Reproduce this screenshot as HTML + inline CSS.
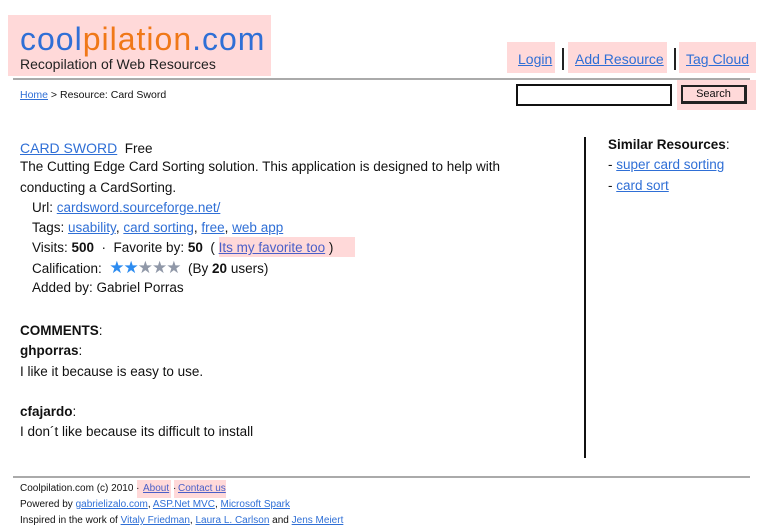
<!DOCTYPE html>
<html><head><style>
*{margin:0;padding:0;box-sizing:border-box}
body{width:781px;height:532px;background:#fff;position:relative;overflow:hidden;font-family:"Liberation Sans",sans-serif;color:#111}
.a{position:absolute;white-space:nowrap}
a,.l{color:#2f6fd6;text-decoration:underline}
.pk{position:absolute;background:#ffd9d9}
.t{font-size:13.5px;line-height:20px}
.f{font-size:10px;line-height:16px}
b{font-weight:bold}
</style></head><body>
<div class="pk" style="left:8px;top:15px;width:263px;height:61px"></div>
<div class="a" style="left:20px;top:19px;font-size:32px;letter-spacing:1px;color:#2f6fd6;line-height:40px">cool<span style="color:#f07818">pilation</span>.com</div>
<div class="a" style="left:20px;top:55px;font-size:14px;line-height:18px;color:#222">Recopilation of Web Resources</div>

<div class="pk" style="left:507px;top:42px;width:48px;height:31px"></div>
<div class="pk" style="left:568px;top:42px;width:99px;height:31px"></div>
<div class="pk" style="left:679px;top:42px;width:77px;height:31px"></div>
<div class="a l" style="left:518px;top:49px;font-size:14px;line-height:20px">Login</div>
<div class="a l" style="left:575px;top:49px;font-size:14px;line-height:20px">Add Resource</div>
<div class="a l" style="left:686px;top:49px;font-size:14px;line-height:20px">Tag Cloud</div>
<div class="a" style="left:562px;top:48px;width:2px;height:22px;background:#222"></div>
<div class="a" style="left:674px;top:48px;width:2px;height:22px;background:#222"></div>

<div class="a" style="left:13px;top:78px;width:737px;height:2px;background:#aaa"></div>
<div class="a" style="left:20px;top:88px;font-size:10.5px;line-height:14px"><span class="l">Home</span> &gt; Resource: Card Sword</div>
<div class="a" style="left:516px;top:84px;width:156px;height:22px;border:2px solid #111"></div>
<div class="pk" style="left:677px;top:80px;width:79px;height:30px"></div>
<div class="a" style="left:681px;top:85px;width:66px;height:19px;border:2px solid #222;border-right-width:3px;border-bottom-width:3px;font-size:11px;line-height:15px;text-align:center">Search</div>

<div class="a t" style="left:20px;top:138px"><span class="l" style="font-size:14px">CARD SWORD</span>&nbsp; Free</div>
<div class="a t" style="left:20px;top:157px">The Cutting Edge Card Sorting solution. This application is designed to help with</div>
<div class="a t" style="left:20px;top:178px">conducting a CardSorting.</div>
<div class="a t" style="left:32px;top:198px">Url: <span class="l">cardsword.sourceforge.net/</span></div>
<div class="a t" style="left:32px;top:218px">Tags: <span class="l">usability</span>, <span class="l">card sorting</span>, <span class="l">free</span>, <span class="l">web app</span></div>
<div class="pk" style="left:219px;top:237px;width:136px;height:20px"></div>
<div class="a t" style="left:32px;top:238px">Visits: <b>500</b> &nbsp;·&nbsp; Favorite by: <b>50</b> &nbsp;( <span class="l" style="color:#4a5fc8">Its my favorite too</span> )</div>
<div class="a t" style="left:32px;top:258px">Calification: &nbsp;<span style="color:#2d8cf0;font-size:17px;letter-spacing:-1px">★★</span><span style="color:#9098a8;font-size:17px;letter-spacing:-1px">★★★</span> &nbsp;(By <b>20</b> users)</div>
<div class="a t" style="left:32px;top:278px">Added by: Gabriel Porras</div>

<div class="a t" style="left:20px;top:321px"><b>COMMENTS</b>:</div>
<div class="a t" style="left:20px;top:341px"><b>ghporras</b>:</div>
<div class="a t" style="left:20px;top:362px">I like it because is easy to use.</div>
<div class="a t" style="left:20px;top:402px"><b>cfajardo</b>:</div>
<div class="a t" style="left:20px;top:422px">I don´t like because its difficult to install</div>

<div class="a" style="left:584px;top:137px;width:2px;height:321px;background:#111"></div>
<div class="a t" style="left:608px;top:135px"><b>Similar Resources</b>:</div>
<div class="a t" style="left:608px;top:155px">- <span class="l">super card sorting</span></div>
<div class="a t" style="left:608px;top:176px">- <span class="l">card sort</span></div>

<div class="a" style="left:13px;top:476px;width:737px;height:2px;background:#aaa"></div>
<div class="pk" style="left:137px;top:480px;width:34px;height:18px"></div>
<div class="pk" style="left:174px;top:480px;width:52px;height:18px"></div>
<div class="a f" style="left:20px;top:481px">Coolpilation.com (c) 2010 · <span class="a l" style="left:123px;top:0;color:#4a5fc8">About</span><span class="a" style="left:153px;top:0">·</span><span class="a l" style="left:158px;top:0;color:#4a5fc8">Contact us</span></div>
<div class="a f" style="left:20px;top:497px">Powered by <span class="l">gabrielizalo.com</span>, <span class="l">ASP.Net MVC</span>, <span class="l">Microsoft Spark</span></div>
<div class="a f" style="left:20px;top:513px">Inspired in the work of <span class="l">Vitaly Friedman</span>, <span class="l">Laura L. Carlson</span> and <span class="l">Jens Meiert</span></div>
</body></html>
